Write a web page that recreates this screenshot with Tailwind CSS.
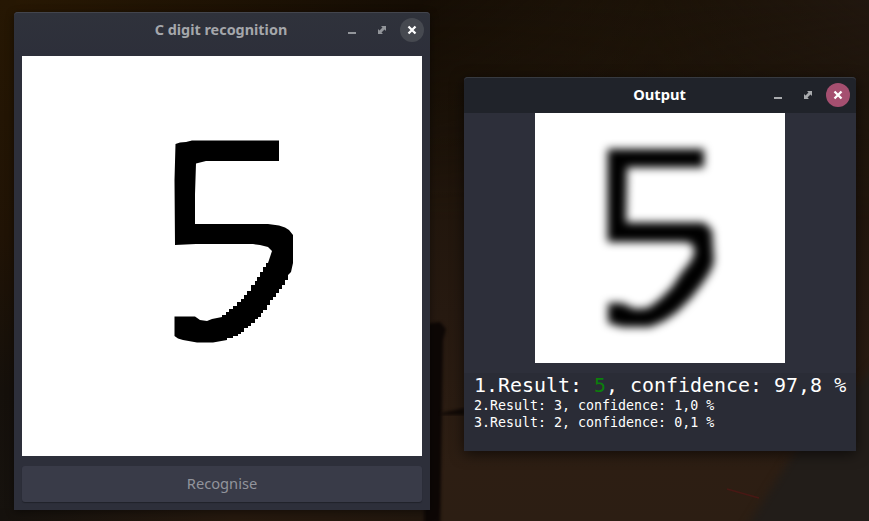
<!DOCTYPE html>
<html lang="en">
<head>
<meta charset="utf-8">
<title>C digit recognition</title>
<script src="https://cdn.jsdelivr.net/npm/@tailwindcss/browser@4"></script>
</head>
<body class="relative h-[521px] w-[869px] overflow-hidden bg-[#1d1309] font-['Noto_Sans',sans-serif]">
<!-- Desktop wallpaper -->
<svg class="absolute inset-0" width="869" height="521" viewBox="0 0 869 521">
  <defs>
    <linearGradient id="v" x1="0" y1="0" x2="0" y2="1"><stop offset="0" stop-color="#1b1207"/><stop offset=".25" stop-color="#1e140a"/><stop offset=".6" stop-color="#261910"/><stop offset=".9" stop-color="#2d1e13"/><stop offset="1" stop-color="#2c1e13"/></linearGradient>
    <linearGradient id="t" x1="0" y1="0" x2="1" y2="0"><stop offset="0" stop-color="#281803"/><stop offset=".48" stop-color="#150d04"/><stop offset=".75" stop-color="#1e1409" stop-opacity=".3"/><stop offset="1" stop-color="#21170f"/></linearGradient>
    <linearGradient id="l" x1="0" y1="0" x2="0" y2="1"><stop offset="0" stop-color="#261703"/><stop offset=".45" stop-color="#201305"/><stop offset=".75" stop-color="#15100b"/><stop offset="1" stop-color="#16120e"/></linearGradient>
    <linearGradient id="b" x1="0" y1="0" x2="1" y2="0"><stop offset="0" stop-color="#15110d"/><stop offset=".55" stop-color="#26190e"/><stop offset="1" stop-color="#22170e"/></linearGradient>
    <linearGradient id="fade" x1="0" y1="0" x2="0" y2="1"><stop offset="0" stop-color="#fff"/><stop offset="1" stop-color="#000"/></linearGradient>
    <mask id="m"><rect width="869" height="220" fill="url(#fade)"/></mask>
    <filter id="s1" x="-50%" y="-10%" width="200%" height="120%" color-interpolation-filters="sRGB"><feGaussianBlur stdDeviation="1.5"/></filter>
    <filter id="s6" x="-50%" y="-50%" width="200%" height="200%" color-interpolation-filters="sRGB"><feGaussianBlur stdDeviation="4"/></filter>
  </defs>
  <rect width="869" height="521" fill="url(#v)"/>
  <rect width="869" height="220" fill="url(#t)" mask="url(#m)"/>
  <rect width="16" height="521" fill="url(#l)"/>
  <rect y="508" width="425" height="13" fill="url(#b)"/>
  <path d="M425 324L440 322L446 329L443 340L440 540H424Z" fill="#0d0705" filter="url(#s1)"/>
  <path d="M441 413L465 408V415L441 415Z" fill="#100906" filter="url(#s1)"/>
  <path d="M795 451L738 541H890V350Z" fill="#221d19" filter="url(#s6)"/>
  <path d="M727 489L759 498" stroke="#481814" stroke-width="1.5"/>
</svg>

<!-- Drawing window -->
<section class="absolute left-[14px] top-[12px] flex h-[498px] w-[416px] flex-col rounded-t-[4px] bg-[#2d2f3a] shadow-[0_2px_8px_rgba(0,0,0,0.45)]">
  <header class="grid h-[44px] shrink-0 grid-cols-[1fr_auto_1fr] rounded-t-[4px] border-t border-[#43454d] bg-linear-to-b from-[#2f323b] to-[#2d2f3a] pb-[10px]">
    <span></span>
    <h1 class="self-center pr-[2px] text-[14.4px] leading-[20px] font-bold text-[#a5a7ab]">C digit recognition</h1>
    <div class="flex items-center justify-end gap-[6px] pr-[6px]">
      <svg width="24" height="24" viewBox="0 0 24 24"><path d="M8 14h8v2H8z" fill="#92959a"/></svg>
      <svg width="24" height="24" viewBox="0 0 24 24" fill="#92959a"><path d="M11 8h5v5l-1.500-1.500-3 3L13 16H8v-5l1.500 1.500 3-3z"/></svg>
      <svg width="24" height="24" viewBox="0 0 24 24"><circle cx="12" cy="12" r="12" fill="#464950"/><path d="M8.500 8.500l7 7M15.500 8.500l-7 7" stroke="#fff" stroke-width="2.300"/></svg>
    </div>
  </header>
  <div class="flex flex-1 flex-col gap-[10px] px-[8px] pb-[8px]">
    <svg class="block shrink-0 bg-white" width="400" height="400" viewBox="22 56 400 400">
      <path d="M175.500 144L180 142.500L186 142L192 140.500H279V161H206L196 163.500L195 194V224H268L279 225.500L285 227.500L289 230L293 235V263L291 272L288 275V280H285V285H282V289H279V293H276V297H273V300H270V305H267V310H263V313H261V317H258V319H255V323H251V326H248V328H244V332H241V334H238V336H233V338H227V340L213 342.500H197L183 340L178 338.500L174.500 336V316.500H195L200 320L207 321L212 319L222 317V315H226V312H229V309H233V306H237V302H241V299H244V295H247V291H251V285H255V281H257V277H260V272H263V267H266V263H268L270 257L272 251L268 247L260 245L253 244H196L175 245L174.500 180Z"/>
    </svg>
    <button disabled class="h-[36px] w-full rounded-[3px] bg-[#393b48] pb-[2px] text-[14.67px] leading-[20px] text-[#92949c] shadow-[0_1px_1px_rgba(0,0,0,0.28)]">Recognise</button>
  </div>
</section>

<!-- Output window -->
<section class="absolute left-[464px] top-[77px] flex h-[374px] w-[392px] flex-col rounded-t-[4px] bg-[#2d2f3a] shadow-[0_3px_14px_rgba(0,0,0,0.6)]">
  <header class="grid h-[36px] shrink-0 grid-cols-[1fr_auto_1fr] rounded-t-[4px] border-t border-[#373a40] bg-[#20232a] pb-[2px]">
    <span></span>
    <h1 class="self-center pr-[1px] pb-[2px] text-[14.67px] leading-[20px] font-bold text-white">Output</h1>
    <div class="flex items-center justify-end gap-[6px] pr-[6px]">
      <svg width="24" height="24" viewBox="0 0 24 24"><path d="M8 14h8v2H8z" fill="#a9abae"/></svg>
      <svg width="24" height="24" viewBox="0 0 24 24" fill="#a9abae"><path d="M11 8h5v5l-1.500-1.500-3 3L13 16H8v-5l1.500 1.500 3-3z"/></svg>
      <svg width="24" height="24" viewBox="0 0 24 24"><circle cx="12" cy="12" r="12" fill="#a54f70"/><path d="M8.500 8.500l7 7M15.500 8.500l-7 7" stroke="#fff" stroke-width="2.300"/></svg>
    </div>
  </header>
  <div class="flex h-[260px] shrink-0 justify-center">
    <svg class="block bg-white" width="250" height="250" viewBox="535 113 250 250">
      <defs><filter id="soft" x="-20%" y="-20%" width="140%" height="140%" color-interpolation-filters="sRGB"><feGaussianBlur stdDeviation="4"/></filter></defs>
      <g filter="url(#soft)">
        <path d="M607.500 149H704V167.500H627L626 222.500H704L712 230L714 262L710 272L702 284L691 298L677 312L664 321L650 327H622L608 323V303H622L635 309L648 308L660 299L672 287L682 272L691 261L695 251L691 243L683 242H607.500Z"/>
      </g>
    </svg>
  </div>
  <div class="flex-1 bg-[#2a2c36] pl-[10px] font-['DejaVu_Sans_Mono',monospace] whitespace-nowrap text-white">
    <p class="h-[24px] text-[19.95px] leading-[24px]">1.Result: <span class="text-[#0b800b]">5</span>, confidence: 97,8 %</p>
    <p class="h-[17px] text-[13.3px] leading-[17px]">2.Result: 3, confidence: 1,0 %</p>
    <p class="h-[17px] text-[13.3px] leading-[17px]">3.Result: 2, confidence: 0,1 %</p>
  </div>
</section>
</body>
</html>
